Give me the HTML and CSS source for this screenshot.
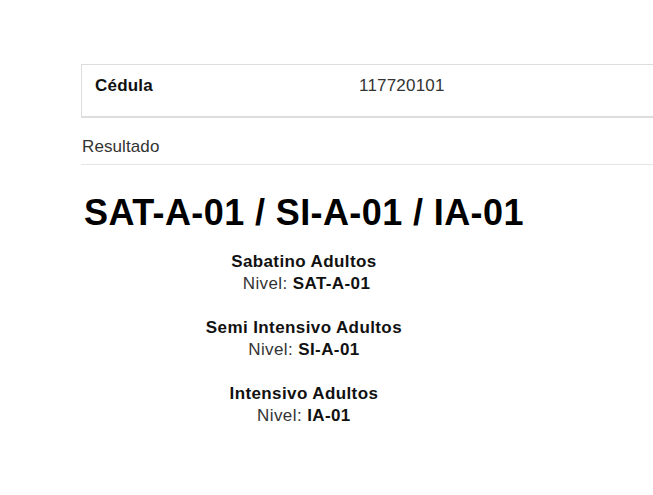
FILE: index.html
```html
<!DOCTYPE html>
<html lang="es">
<head>
<meta charset="utf-8">
<title>Resultado</title>
<link rel="stylesheet" href="styles.css">
</head>
<body>
<main class="page">
  <div class="card">
    <div class="label">Cédula</div>
    <div class="value">117720101</div>
  </div>
  <div class="legend">Resultado</div>
  <div class="result">
    <h1 class="code">SAT-A-01 / SI-A-01 / IA-01</h1>
    <div class="levels">
      <div class="level">
        <div class="name">Sabatino Adultos</div>
        <div class="nivel">&nbsp;Nivel: <b>SAT-A-01</b></div>
      </div>
      <div class="level">
        <div class="name">Semi Intensivo Adultos</div>
        <div class="nivel">Nivel: <b>SI-A-01</b></div>
      </div>
      <div class="level">
        <div class="name">Intensivo Adultos</div>
        <div class="nivel">Nivel: <b>IA-01</b></div>
      </div>
    </div>
  </div>
</main>
</body>
</html>
```
FILE: styles.css
```css
html, body {
  margin: 0;
  padding: 0;
  overflow: hidden;
  background: #fff;
}
body {
  font-family: "Liberation Sans", Arial, sans-serif;
  font-size: 17px;
  color: #333;
}
.page {
  padding: 64px 0 0 81px;
  width: 620px;
}
.card {
  display: grid;
  grid-template-columns: 264px 1fr;
  border: 1px solid #ddd;
  border-bottom: 2px solid #ddd;
  padding: 11px 13px 20px;
  line-height: 20px;
  letter-spacing: 0.2px;
}
.label {
  font-weight: bold;
  color: #111;
}
.value {
  color: #333;
}
.legend {
  margin-top: 19px;
  line-height: 20px;
  padding-bottom: 7px;
  border-bottom: 1px solid #e5e5e5;
  color: #333;
  padding-left: 1px;
  letter-spacing: 0.1px;
}
.result {
  display: inline-block;
  margin-top: 28px;
  padding-left: 3px;
}
.code {
  margin: 0;
  font-size: 36px;
  line-height: 40px;
  font-weight: bold;
  color: #000;
  letter-spacing: 0.4px;
}
.levels {
  margin-top: 18px;
  text-align: center;
  font-size: 17px;
  line-height: 22px;
  letter-spacing: 0.4px;
}
.level {
  margin-bottom: 22px;
}
.name {
  font-weight: bold;
  color: #111;
}
.nivel {
  color: #333;
}
.nivel b {
  color: #111;
}
```
